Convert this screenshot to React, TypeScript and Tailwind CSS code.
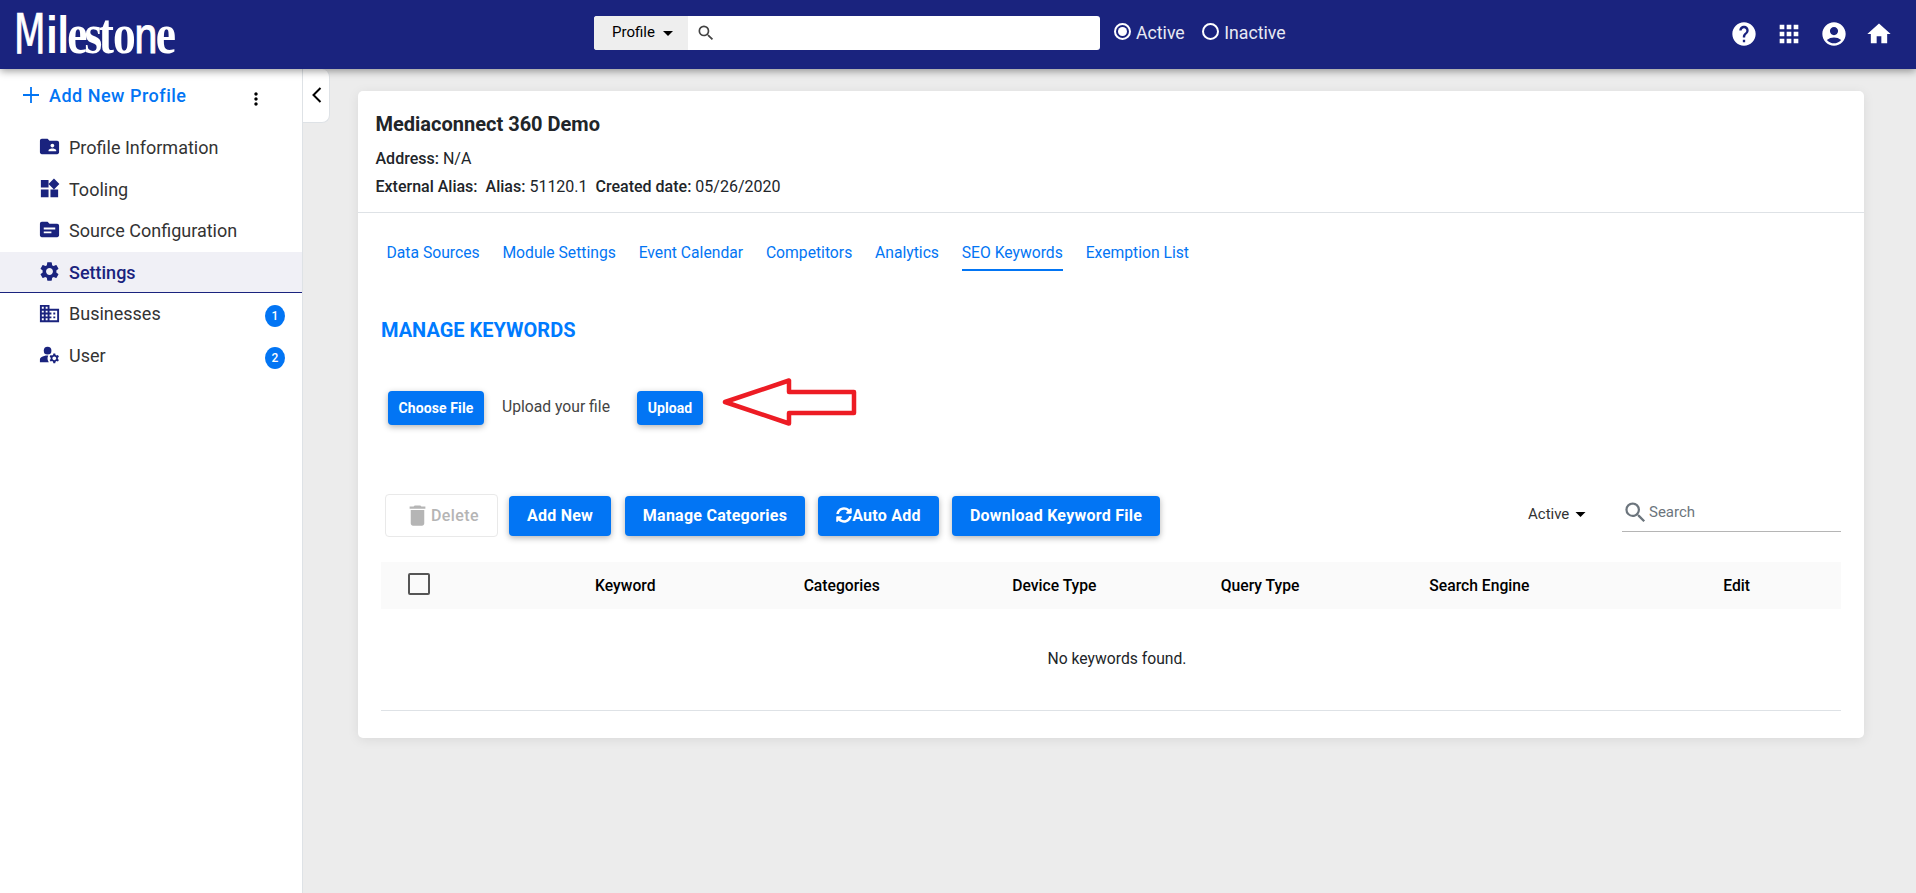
import type { ReactNode } from 'react'
import { FaSyncAlt } from 'react-icons/fa'
import {
  MdAccountCircle,
  MdApps,
  MdBusiness,
  MdDelete,
  MdFolderShared,
  MdHelp,
  MdHome,
  MdManageAccounts,
  MdMoreVert,
  MdSearch,
  MdSettings,
  MdSource,
  MdWidgets
} from 'react-icons/md'

const menu = [
  { label: 'Profile Information', icon: MdFolderShared },
  { label: 'Tooling', icon: MdWidgets },
  { label: 'Source Configuration', icon: MdSource },
  { label: 'Settings', icon: MdSettings, active: true },
  { label: 'Businesses', icon: MdBusiness, count: 1 },
  { label: 'User', icon: MdManageAccounts, count: 2 }
]

const tabs = [
  'Data Sources',
  'Module Settings',
  'Event Calendar',
  'Competitors',
  'Analytics',
  'SEO Keywords',
  'Exemption List'
]

const columns = ['Keyword', 'Categories', 'Device Type', 'Query Type', 'Search Engine']

function Logo() {
  return (
    <svg className="ml-4 mt-2 h-[52px] w-[164px] shrink-0 overflow-visible" viewBox="0 0 164 52">
      <text y="30.7" transform="scale(1.14 1.45)" fill="#fff" fontFamily="Liberation Serif, serif" fontSize="40" fontWeight="700">
        <tspan x="-2" fontFamily="DejaVu Sans Condensed, DejaVu Sans, sans-serif" fontSize="38" fontWeight="400" stroke="#fff" strokeWidth="0.5" textLength="28" lengthAdjust="spacingAndGlyphs">M</tspan>
        <tspan x="26.5 36.3" fontFamily="Liberation Sans, sans-serif" fontSize="36">il</tspan>
        <tspan x="45 60 72.5 85">esto</tspan>
        <tspan x="104" fontFamily="Liberation Sans, sans-serif" fontSize="36" fontWeight="400" stroke="#fff" strokeWidth="0.8">n</tspan>
        <tspan x="122.5">e</tspan>
      </text>
    </svg>
  )
}

function Caret({ className }: { className: string }) {
  return (
    <svg viewBox="0 0 10 5" className={className} fill="currentColor">
      <path d="M0 0h10L5 5z" />
    </svg>
  )
}

function Radio({ label, checked }: { label: string; checked?: boolean }) {
  return (
    <label className="flex items-start gap-[5.5px]">
      <span className="flex size-[17px] items-center justify-center rounded-full border-2 border-white">
        {checked && <span className="size-[9px] rounded-full bg-white" />}
      </span>
      <span className="text-[17.7px] leading-5 text-[#e8e9f3]">{label}</span>
    </label>
  )
}

function Header() {
  return (
    <header className="relative z-10 flex h-[69px] shrink-0 items-start bg-[#1a237e] shadow-[0_2px_8px_rgba(0,0,0,0.4)]">
      <Logo />

      <div className="ml-[414px] mt-4 flex h-[34px] w-[506px] shrink-0 overflow-hidden rounded-[3px] bg-white">
        <div className="flex w-[94px] items-center bg-[#eee] pl-[18px] text-[15px] text-black">
          <span className="-mt-[2px] w-[51px]">Profile</span>
          <Caret className="h-[5px] w-[10px]" />
        </div>
        <MdSearch className="ml-2 mt-[7px] size-5 text-[#444]" />
      </div>

      <div className="ml-[13.5px] mt-[23px] flex gap-[17px]">
        <Radio label="Active" checked />
        <Radio label="Inactive" />
      </div>

      <div className="ml-auto mr-[23.5px] mt-[19.5px] flex gap-[17px] text-[28px] text-white">
        <MdHelp />
        <MdApps />
        <MdAccountCircle />
        <MdHome />
      </div>
    </header>
  )
}

function Sidebar() {
  return (
    <aside className="w-[303px] shrink-0 border-r border-[#dee2e6] bg-white">
      <div className="flex h-[58px] items-start pl-[23px] pt-[15px] text-[#0275f4]">
        <svg viewBox="0 0 16 16" className="mt-[3px] size-4" stroke="currentColor" strokeWidth="1.8">
          <path d="M8 0v16M0 8h16" />
        </svg>
        <span className="ml-[10px] w-[197px] text-[18px] font-medium leading-6 tracking-[0.5px]">Add New Profile</span>
        <MdMoreVert className="mt-[5px] size-5 text-black" />
      </div>
      <nav>
        {menu.map(item => (
          <a
            key={item.label}
            className={`flex h-[41.6px] items-center border-b pb-px pl-[38px] pr-[17px] ${
              item.active ? 'border-[#1a237e] bg-[#f0f0f6] text-[#1a237e]' : 'border-transparent text-[#333]'
            }`}
          >
            <item.icon className="size-[23px] text-[#1a237e]" />
            <span className={`ml-2 mt-[2.5px] text-[18px] leading-6 ${item.active ? 'font-medium' : ''}`}>{item.label}</span>
            {item.count && (
              <span className="ml-auto mt-[6px] flex h-[22px] w-5 items-center justify-center rounded-[50%] bg-[#0275f4] text-[12px] font-medium text-white">
                {item.count}
              </span>
            )}
          </a>
        ))}
      </nav>
    </aside>
  )
}

function Button({ className, children }: { className: string; children: ReactNode }) {
  return (
    <button
      className={`flex items-center justify-center rounded-[4px] bg-[#0275f4] font-bold text-white shadow-[0_2px_6px_rgba(0,0,0,0.3)] ${className}`}
    >
      {children}
    </button>
  )
}

function ProfileSummary() {
  return (
    <div className="h-[122px] border-b border-[#dee2e6] pl-[17.5px] pt-[21px] text-[16px] text-[#212529]">
      <h1 className="text-[20px] font-bold leading-6">Mediaconnect 360 Demo</h1>
      <p className="mt-[13px] leading-5">
        <b className="font-medium">Address:</b> N/A
      </p>
      <p className="mt-2 flex gap-[8px] leading-5">
        <b className="font-medium">External Alias:</b>
        <span><b className="font-medium">Alias:</b> 51120.1</span>
        <span><b className="font-medium">Created date:</b> 05/26/2020</span>
      </p>
    </div>
  )
}

function UploadRow() {
  return (
    <div className="mt-10 flex h-[60px] items-start pl-[7px]">
      <Button className="mt-[9px] h-[34px] w-24 text-[14px] tracking-[0.1px]">Choose File</Button>
      <span className="ml-[18px] mt-[15px] w-[117px] text-[15.7px] leading-5 text-[#444]">Upload your file</span>
      <Button className="ml-[18px] mt-[9px] h-[34px] w-[66px] text-[14px] tracking-[0.1px]">Upload</Button>
      <svg viewBox="0 0 136 50" className="ml-[18px] -mt-[5px] h-[50px] w-[136px]" fill="none">
        <path d="M4 25 68 3.500V15H133V36H68V46.500Z" stroke="#ed1c24" strokeWidth="4.500" strokeLinejoin="round" />
      </svg>
    </div>
  )
}

function Toolbar() {
  return (
    <div className="flex items-start pl-1 text-[16px] tracking-[0.25px]">
      <button className="flex h-[43px] w-[113px] items-center rounded-[4px] border border-[#e9e9e9] pl-[18px] font-medium tracking-[0.4px] text-[#b5b5b5]">
        <MdDelete className="size-[27px]" />
        Delete
      </button>
      <Button className="ml-[11px] mt-[2px] h-10 w-[102px]">Add New</Button>
      <Button className="ml-[14px] mt-[2px] h-10 w-[180px]">Manage Categories</Button>
      <Button className="ml-[13px] mt-[2px] h-10 w-[121px]">
        <FaSyncAlt className="-mt-[2px] size-4" />
        Auto Add
      </Button>
      <Button className="ml-[13px] mt-[2px] h-10 w-[208px]">Download Keyword File</Button>

      <div className="ml-auto mr-9 mt-[10px] flex items-center text-[15px] leading-5 tracking-normal text-[#333]">
        <span className="w-[47px]">Active</span>
        <Caret className="h-[5px] w-[11px] text-black" />
      </div>
      <div className="flex h-[38px] w-[219px] border-b border-[#b5b5b5] tracking-normal text-[#6c757d]">
        <MdSearch className="mt-[5px] size-[27px]" />
        <span className="mt-2 text-[15px] leading-5">Search</span>
      </div>
    </div>
  )
}

function KeywordTable() {
  return (
    <table className="mt-[25px] w-full table-fixed text-left text-[15.7px] text-black">
      <thead>
        <tr className="h-[47px] bg-[#fafafa]">
          <th className="pl-[27px]">
            <span className="-mt-[3px] block size-[22px] rounded-[2px] border-2 border-[#555]" />
          </th>
          {columns.map(column => (
            <th key={column} className="pl-[5.5px] font-medium">{column}</th>
          ))}
          <th className="text-center font-medium">Edit</th>
        </tr>
      </thead>
      <tbody>
        <tr className="h-[101px] border-b border-[#dee2e6]">
          <td colSpan={7} className="pl-3 text-center text-[#212529]">No keywords found.</td>
        </tr>
      </tbody>
    </table>
  )
}

export default function App() {
  return (
    <div className="flex h-screen flex-col overflow-hidden bg-[#ececec] font-[Roboto,sans-serif]">
      <Header />
      <div className="flex min-h-0 flex-1">
        <Sidebar />
        <button className="flex h-[54px] w-[27px] shrink-0 justify-center rounded-r-lg border-b border-r border-[#dee2e6] bg-white pl-px pt-[18px]">
          <svg viewBox="0 0 10 16" className="h-4 w-[10px]" fill="none" stroke="#000" strokeWidth="2">
            <path d="M8.500 1 1.500 8l7 7" />
          </svg>
        </button>

        <main className="ml-7 mt-[22px] h-[647px] w-[1506px] rounded-[5px] bg-white shadow-[0_2px_12px_rgba(0,0,0,0.08)]">
          <ProfileSummary />
          <div className="px-[23px]">
            <div className="flex gap-[22.8px] pl-[5.5px] pt-[29px] text-[15.7px] text-[#0275f4]">
              {tabs.map(tab => (
                <a
                  key={tab}
                  className={`h-[29px] border-b-2 leading-[21px] ${tab === 'SEO Keywords' ? 'border-[#0275f4]' : 'border-transparent'}`}
                >
                  {tab}
                </a>
              ))}
            </div>
            <h2 className="mt-[47px] text-[20px] font-bold leading-6 text-[#007bff]">MANAGE KEYWORDS</h2>
            <UploadRow />
            <div className="mt-[52px]">
              <Toolbar />
            </div>
            <KeywordTable />
          </div>
        </main>
      </div>
    </div>
  )
}
